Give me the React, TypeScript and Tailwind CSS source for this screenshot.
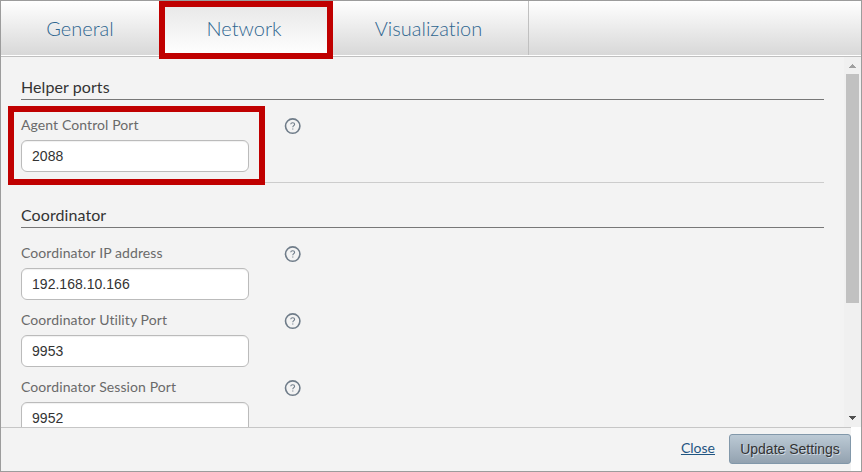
import React from "react";

function HelpIcon() {
  return (
    <svg width="18" height="18" viewBox="0 0 18 18" fill="none" stroke="#6f7c89" className="mt-[2px] ml-[35px] shrink-0">
      <circle cx="8.7" cy="9.1" r="7.2" strokeWidth="1.6" />
      <path d="M6.7 7.2C6.8 6.2 7.6 5.7 8.7 5.7c1.1 0 1.9.6 1.9 1.6C10.6 8.6 8.8 8.7 8.8 10.2" strokeWidth="1.1" />
      <path d="M8.8 11.4v1.1" strokeWidth="1.1" />
    </svg>
  );
}

function Field({ label, value }: { label: string; value: string }) {
  return (
    <div className="flex h-[67px] shrink-0">
      <div className="w-[228px]">
        <label className="block h-[25px] whitespace-nowrap text-[14px] leading-[20px] tracking-[0.09px] text-[#6a6a6a]">{label}</label>
        <div className="flex h-8 items-center rounded-[6px] border border-[#bbb] bg-white px-[10px] font-['Liberation_Sans',Arial,sans-serif] text-[14px] tracking-[0.03px] text-[#333] shadow-[inset_0_1px_1px_rgba(0,0,0,0.06)]">
          {value}
        </div>
      </div>
      <HelpIcon />
    </div>
  );
}

function Heading({ children }: { children: React.ReactNode }) {
  return (
    <h2 className="h-[23px] shrink-0 border-b border-[#777] text-[16px] leading-[19px] tracking-[0.08px] text-[#333]">
      {children}
    </h2>
  );
}

export default function App() {
  return (
    <div className="relative flex h-[472px] w-[862px] flex-col overflow-hidden border border-[#9c9c9c] bg-[#f3f3f3] font-[Lato,sans-serif]">
      <nav className="flex h-[54px] shrink-0 bg-linear-to-b from-white to-[#d8d8d8] text-[20px] font-light text-[#2f6690] [font-variant-ligatures:none]">
        <div className="flex w-[158px] items-center justify-center">General</div>
        <div className="flex w-[174px] items-center justify-center bg-linear-to-b from-[#e6e6e6] to-white pr-1">Network</div>
        <div className="flex w-[196px] items-center justify-center border-r border-[#c0c0c0] pr-1">Visualization</div>
      </nav>
      <div className="h-[2px] shrink-0 border-b border-[#c0c0c0] bg-white" />
      <main className="flex h-[370px] shrink-0 overflow-hidden">
        <div className="flex w-[843px] flex-col pr-[20px] pl-5 pt-5">
          <Heading>Helper ports</Heading>
          <div className="mt-[15px] h-[68px] shrink-0 border-b border-[#ccc]">
            <Field label="Agent Control Port" value="2088" />
          </div>
          <div className="mt-[22px] mb-[15px]">
            <Heading>Coordinator</Heading>
          </div>
          <Field label="Coordinator IP address" value="192.168.10.166" />
          <Field label="Coordinator Utility Port" value="9953" />
          <Field label="Coordinator Session Port" value="9952" />
        </div>
        <div className="flex w-[17px] flex-col items-center bg-[#f0f0f0]">
          <svg width="17" height="17" viewBox="0 0 17 17" fill="#a0a0a0" shapeRendering="crispEdges" className="shrink-0">
            <path d="M8 7h1v1h1v1h1v1h1v1H5v-1h1V9h1V8h1z" />
          </svg>
          <div className="h-[229px] w-[13px] shrink-0 bg-[#c1c1c1]" />
          <svg width="17" height="17" viewBox="0 0 17 17" fill="#505050" shapeRendering="crispEdges" className="mt-auto shrink-0">
            <path d="M5 6h7v1h-1v1h-1v1H9v1H8V9H7V8H6V7H5z" />
          </svg>
        </div>
      </main>
      <footer className="flex grow bg-white">
        <div className="flex w-[850px] items-start justify-end border-t border-[#c6c6c6] bg-[#f3f3f3] pt-[6px]">
          <a className="mr-[14px] text-[14px] leading-[28px] text-[#1f5582] underline">Close</a>
          <button className="h-[30px] w-[122px] whitespace-nowrap rounded-[3px] border border-[#8298aa] bg-linear-to-b from-[#bccad5] to-[#93a2b0] font-['Liberation_Sans',Arial,sans-serif] text-[14px] text-[#333] [text-shadow:1px_1px_0_#d0dbe4]">
            Update Settings
          </button>
        </div>
      </footer>
      <div className="absolute top-0 left-[158px] h-[58px] w-[174px] border-[6px] border-[#c00000]" />
      <div className="absolute top-[105px] left-[7px] h-[79px] w-[257px] border-[6px] border-[#c00000]" />
    </div>
  );
}
